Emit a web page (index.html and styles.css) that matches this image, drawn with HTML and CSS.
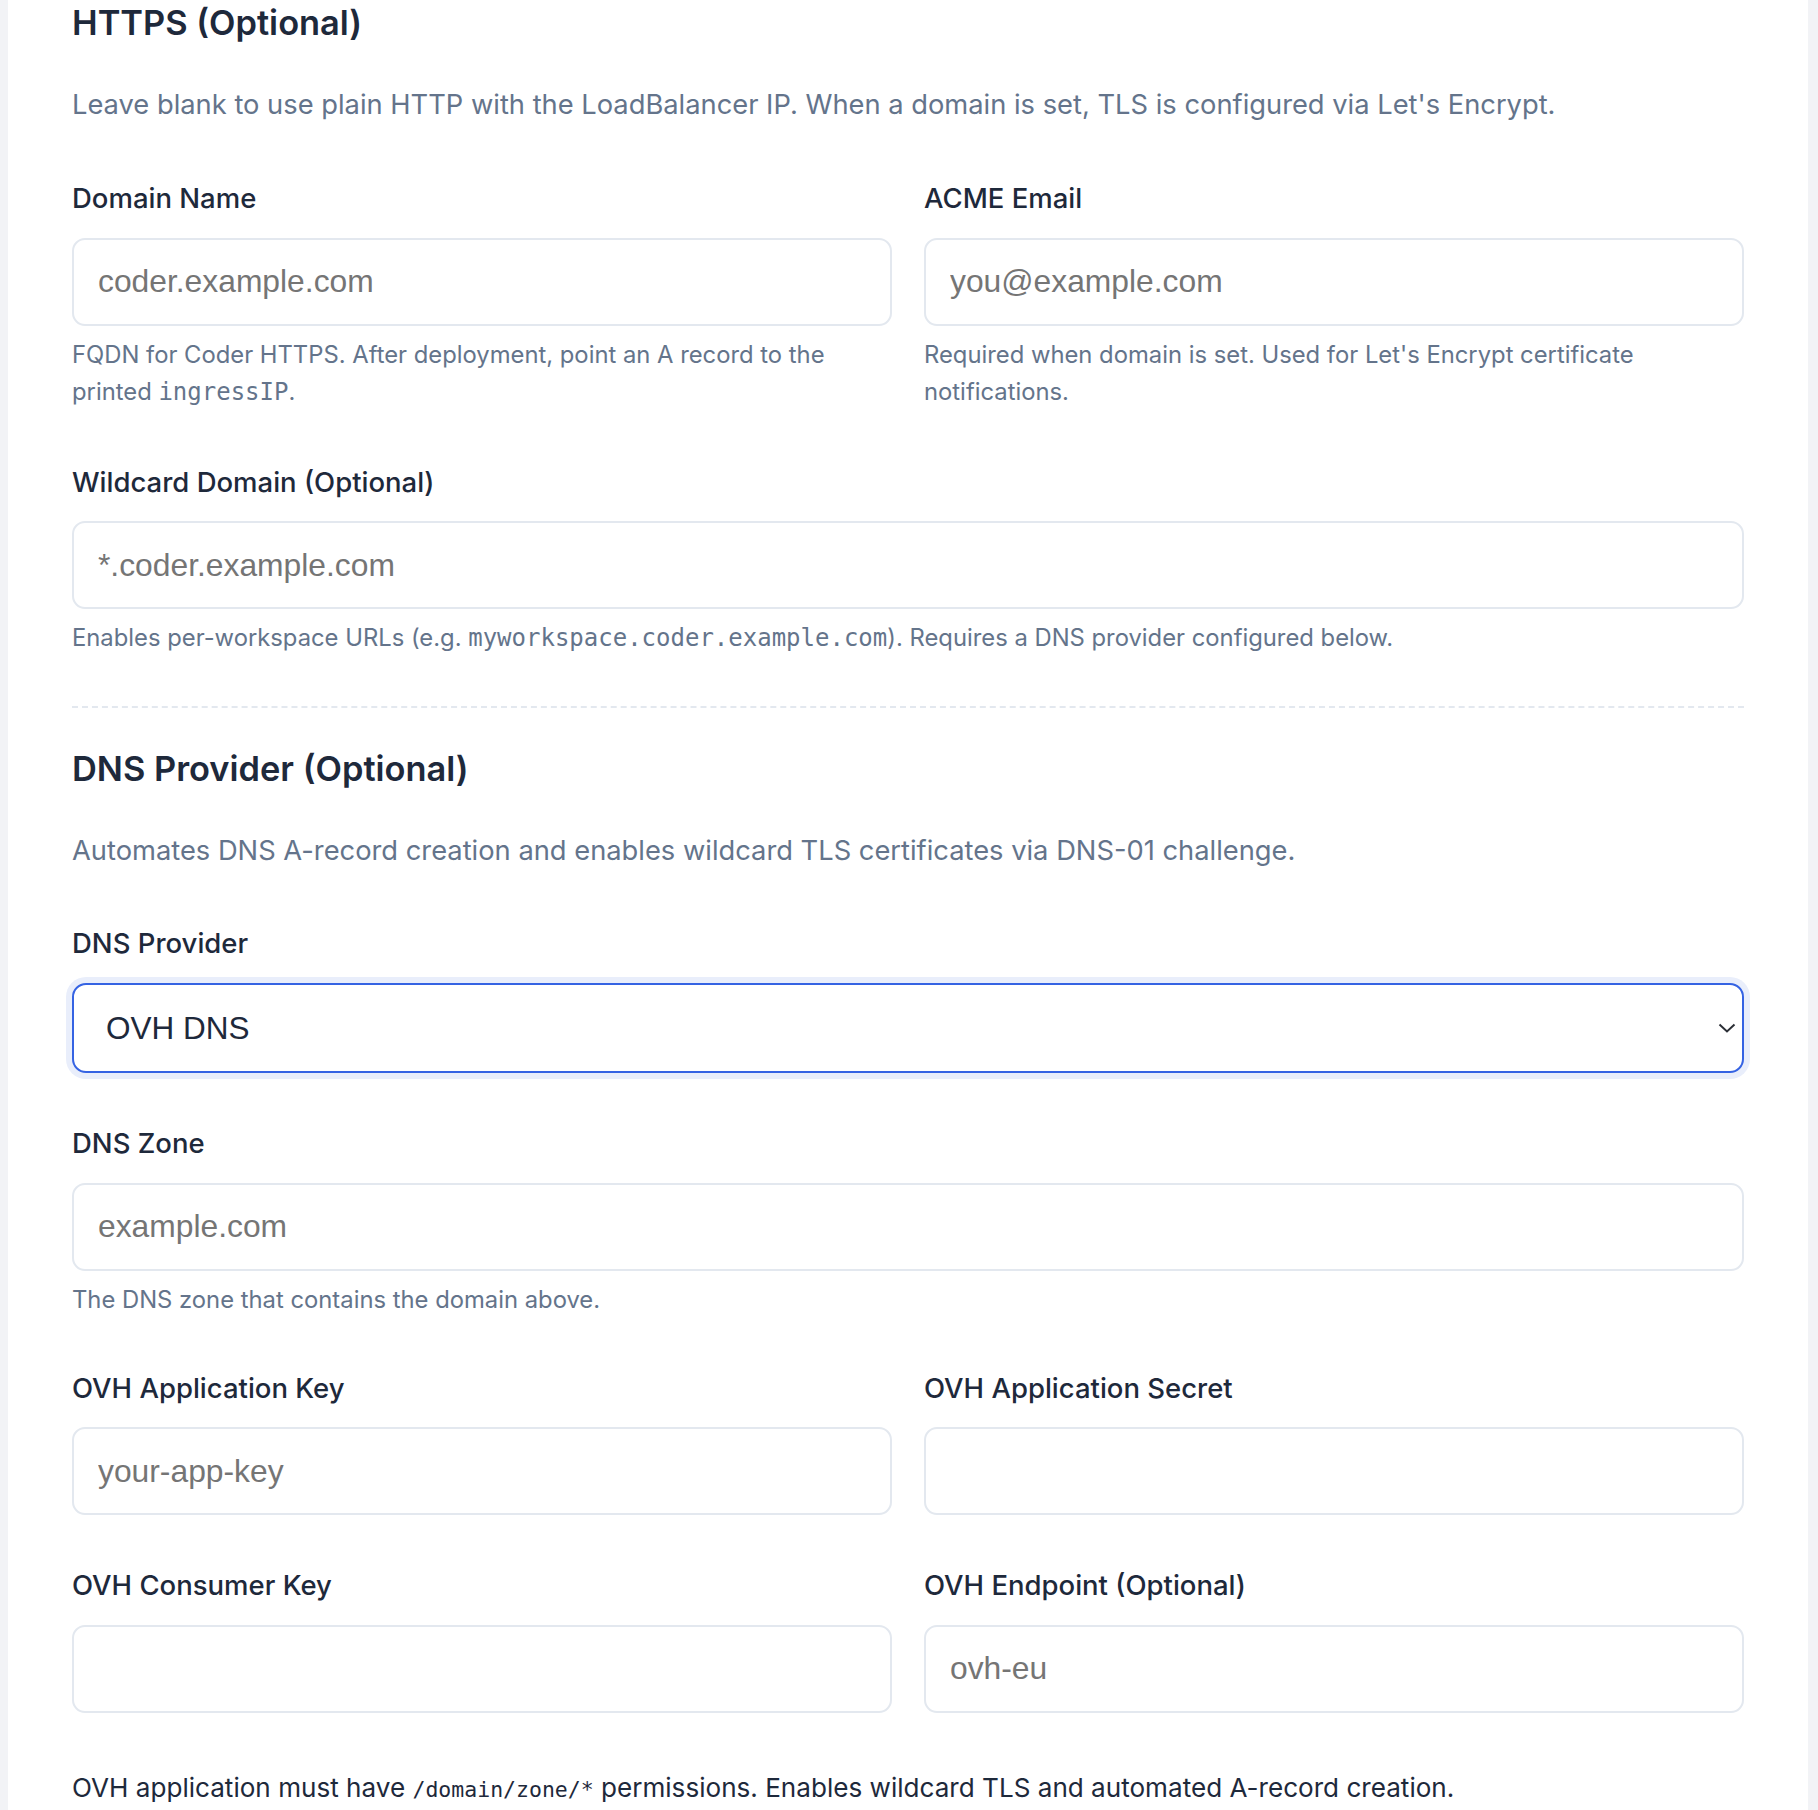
FILE: index.html
```html
<!DOCTYPE html>
<html lang="en">
<head>
<meta charset="utf-8">
<title>HTTPS and DNS settings</title>
<link rel="stylesheet" href="styles.css">
</head>
<body>
<div class="card">
  <section class="section">
    <h2 class="section-title">HTTPS (Optional)</h2>
    <p class="section-desc">Leave blank to use plain HTTP with the LoadBalancer IP. When a domain is set, TLS is configured via Let's Encrypt.</p>

    <div class="row">
      <div class="field">
        <label class="label">Domain Name</label>
        <input class="input" type="text" placeholder="coder.example.com">
        <p class="help">FQDN for Coder HTTPS. After deployment, point an A record to the printed <code>ingressIP</code>.</p>
      </div>
      <div class="field">
        <label class="label">ACME Email</label>
        <input class="input" type="text" placeholder="you@example.com">
        <p class="help">Required when domain is set. Used for Let's Encrypt certificate notifications.</p>
      </div>
    </div>

    <div class="field">
      <label class="label">Wildcard Domain (Optional)</label>
      <input class="input" type="text" placeholder="*.coder.example.com">
      <p class="help">Enables per-workspace URLs (e.g. <code>myworkspace.coder.example.com</code>). Requires a DNS provider configured below.</p>
    </div>
  </section>

  <hr class="divider">

  <section class="section section-dns">
    <h2 class="section-title">DNS Provider (Optional)</h2>
    <p class="section-desc">Automates DNS A-record creation and enables wildcard TLS certificates via DNS-01 challenge.</p>

    <div class="field">
      <label class="label">DNS Provider</label>
      <div class="select-wrap">
        <select class="select">
          <option>OVH DNS</option>
        </select>
        <svg class="chevron" width="18" height="10" viewBox="0 0 18 10"><polyline points="1.5,1.5 9,8.5 16.5,1.5" fill="none" stroke="#2b2f36" stroke-width="2"/></svg>
      </div>
    </div>

    <div class="field">
      <label class="label">DNS Zone</label>
      <input class="input" type="text" placeholder="example.com">
      <p class="help">The DNS zone that contains the domain above.</p>
    </div>

    <div class="row">
      <div class="field">
        <label class="label">OVH Application Key</label>
        <input class="input" type="text" placeholder="your-app-key">
      </div>
      <div class="field">
        <label class="label">OVH Application Secret</label>
        <input class="input" type="password">
      </div>
    </div>

    <div class="row">
      <div class="field">
        <label class="label">OVH Consumer Key</label>
        <input class="input" type="password">
      </div>
      <div class="field">
        <label class="label">OVH Endpoint (Optional)</label>
        <input class="input" type="text" placeholder="ovh-eu">
      </div>
    </div>

    <p class="note">OVH application must have <code>/domain/zone/*</code> permissions. Enables wildcard TLS and automated A-record creation.</p>
  </section>
</div>
</body>
</html>
```

FILE: styles.css
```css
html, body {
  margin: 0;
  padding: 0;
  background: #f2f3f6;
}

body {
  font-family: Inter, "Noto Sans", sans-serif;
  color: #1e293b;
}

.card {
  margin: 0 10px 0 8px;
  background: #ffffff;
  padding: 2px 64px 40px 64px;
  min-height: 1810px;
  box-sizing: border-box;
}

.section {
  display: flex;
  flex-direction: column;
}

.section-title {
  margin: 0;
  font-size: 34.4px;
  line-height: 42px;
  font-weight: 600;
  color: #1e293b;
}

.section-desc {
  margin: 43px 0 57px 0;
  font-size: 27.3px;
  line-height: 36px;
  color: #64748b;
}

.section-dns .section-desc {
  margin-bottom: 56px;
}

.row {
  display: grid;
  grid-template-columns: 1fr 1fr;
  column-gap: 32px;
}

.field {
  display: flex;
  flex-direction: column;
  margin-bottom: 54px;
}

.section-dns .field {
  margin-bottom: 52px;
}

.label {
  font-size: 27.5px;
  line-height: 36px;
  font-weight: 500;
  color: #1e293b;
  margin-bottom: 21.5px;
}

.input {
  height: 88px;
  box-sizing: border-box;
  border: 2px solid #e3e8ef;
  border-radius: 13px;
  padding: 0 24px;
  font-family: "Liberation Sans", Arial, sans-serif;
  font-size: 31.8px;
  color: #1e293b;
  background: #ffffff;
  outline: none;
}

.input::placeholder {
  color: #757575;
}

.help {
  margin: 10px 0 0 0;
  font-size: 23.8px;
  line-height: 37px;
  color: #64748b;
}

.help code {
  font-family: "DejaVu Sans Mono", "Liberation Mono", monospace;
  font-size: 24px;
  line-height: 1;
}

.note code {
  font-family: "DejaVu Sans Mono", "Liberation Mono", monospace;
  font-size: 21.5px;
  line-height: 1;
}

.divider {
  border: 0;
  border-top: 2px dashed #e3e8ef;
  margin: -4px 0 39.5px 0;
}

.select-wrap {
  position: relative;
  margin-top: 1px;
}

.select {
  display: block;
  width: 100%;
  height: 90px;
  box-sizing: border-box;
  appearance: none;
  -webkit-appearance: none;
  border: 2px solid #3563e3;
  border-radius: 14px;
  box-shadow: 0 0 0 6px #e9eefb;
  padding: 0 32px;
  font-family: "Liberation Sans", Arial, sans-serif;
  font-size: 31.5px;
  color: #1e293b;
  background: #ffffff;
  outline: none;
}

.chevron {
  position: absolute;
  right: 8px;
  top: 40px;
  pointer-events: none;
}

.note {
  margin: 5.5px 0 0 0;
  font-size: 26.1px;
  line-height: 36px;
  color: #1e293b;
}
```
